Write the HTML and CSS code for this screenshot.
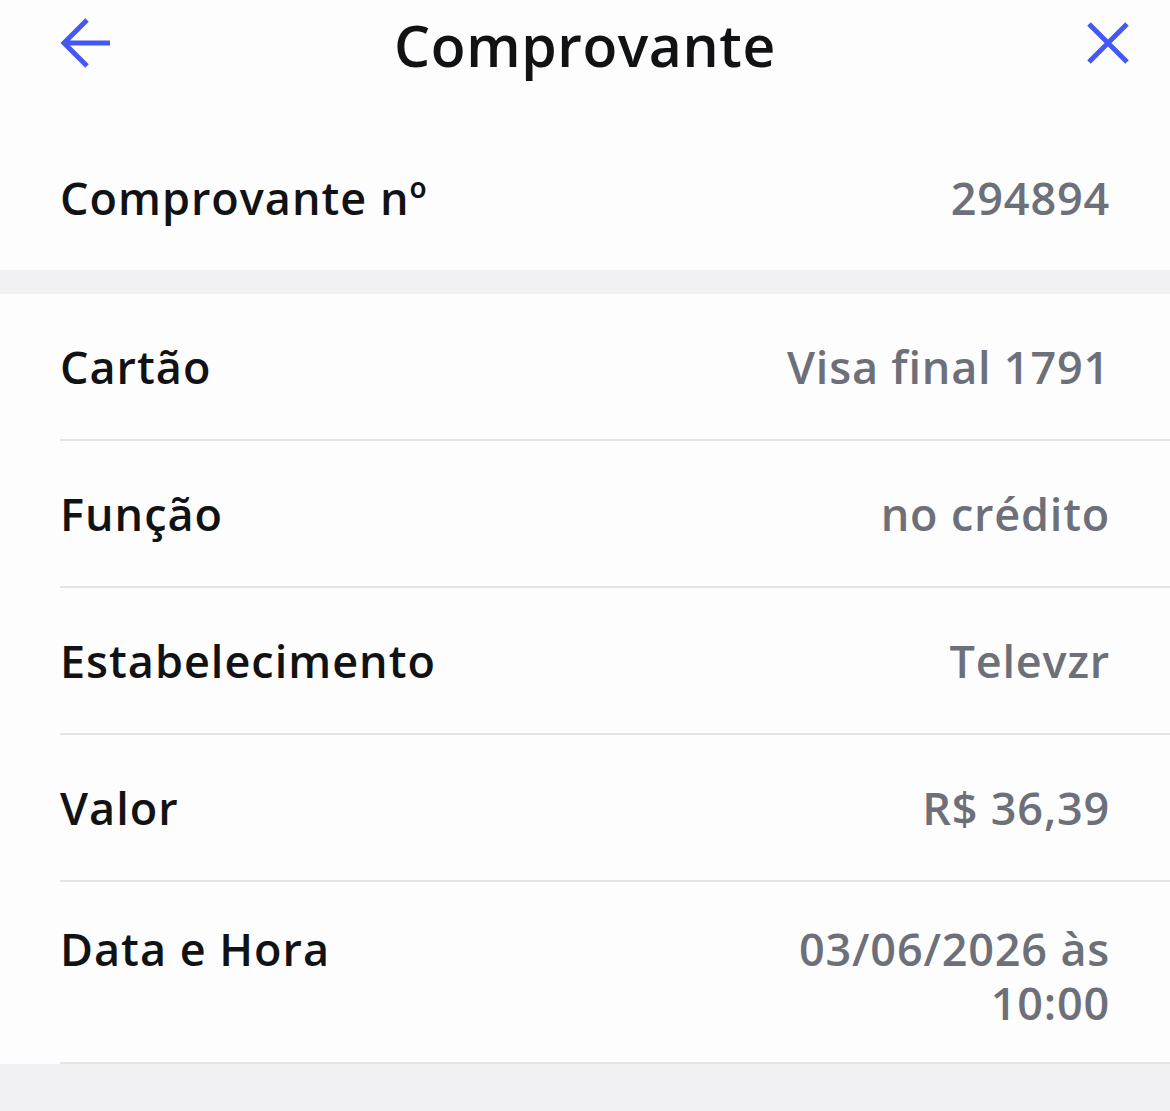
FILE: index.html
```html
<!DOCTYPE html>
<html lang="pt-BR">
<head>
  <meta charset="UTF-8" />
  <meta name="viewport" content="width=device-width, initial-scale=1.0"/>
  <title>Comprovante</title>
  <link rel="stylesheet" href="styles.css">
</head>
<body>

  <div class="screen">
    <!-- Top bar -->
    <header class="topbar">
      <button class="icon-btn back" aria-label="Voltar">
        <svg width="52" height="52" viewBox="0 0 52 52">
          <path d="M50 26 H4 M27 3 L4 26 L27 49" fill="none" stroke="#4558f6" stroke-width="5"/>
        </svg>
      </button>
      <h1 class="title">Comprovante</h1>
      <button class="icon-btn close" aria-label="Fechar">
        <svg width="44" height="44" viewBox="0 0 44 44">
          <path d="M3 3 L41 41 M41 3 L3 41" fill="none" stroke="#4558f6" stroke-width="5"/>
        </svg>
      </button>
    </header>

    <section class="card card-top">
      <div class="row">
        <span class="label">Comprovante nº</span>
        <span class="value">294894</span>
      </div>
    </section>

    <div class="band"></div>

    <section class="card">
      <div class="row line">
        <span class="label">Cartão</span>
        <span class="value">Visa final 1791</span>
      </div>
      <div class="row line">
        <span class="label">Função</span>
        <span class="value">no crédito</span>
      </div>
      <div class="row line">
        <span class="label">Estabelecimento</span>
        <span class="value">Televzr</span>
      </div>
      <div class="row line">
        <span class="label">Valor</span>
        <span class="value">R$ 36,39</span>
      </div>
      <div class="row line row-tall">
        <span class="label">Data e Hora</span>
        <span class="value">03/06/2026 às<br>10:00</span>
      </div>
    </section>
  </div>

</body>
</html>
```

FILE: styles.css
```css
* {
  box-sizing: border-box;
  margin: 0;
  padding: 0;
}

body {
  font-family: "Open Sans", Lato, sans-serif;
  background: #f1f1f3;
  color: #111214;
  width: 1170px;
  min-height: 1111px;
}

.screen {
  display: flex;
  flex-direction: column;
}

.topbar {
  display: grid;
  grid-template-columns: 1fr auto 1fr;
  align-items: center;
  height: 90px;
  padding: 0 40px;
  background: #fdfdfe;
}

.icon-btn {
  display: flex;
  align-items: center;
  justify-content: center;
  border: none;
  background: none;
  cursor: pointer;
}

.back {
  justify-self: start;
  margin-left: 20px;
  margin-top: -4px;
}

.close {
  justify-self: end;
  margin-top: -4px;
}

.title {
  font-size: 57px;
  font-weight: 600;
  letter-spacing: 0.6px;
}

.card {
  background: #fdfdfe;
  padding-left: 60px;
}

.card-top {
  height: 180px;
  padding-top: 36px;
}

.card-top .row {
  height: 144px;
}

.band {
  height: 24px;
  background: #f1f1f3;
}

.row {
  display: flex;
  justify-content: space-between;
  align-items: center;
  padding-right: 60px;
  font-size: 45px;
  line-height: 54px;
}

.line {
  height: 147px;
  border-bottom: 2px solid #e3e4e7;
}

.row-tall {
  height: 182px;
  align-items: flex-start;
  padding-top: 40px;
}

.label {
  font-weight: 600;
  letter-spacing: 1px;
}

.value {
  color: #6d7078;
  font-weight: 600;
  letter-spacing: 0.8px;
  text-align: right;
}
```
